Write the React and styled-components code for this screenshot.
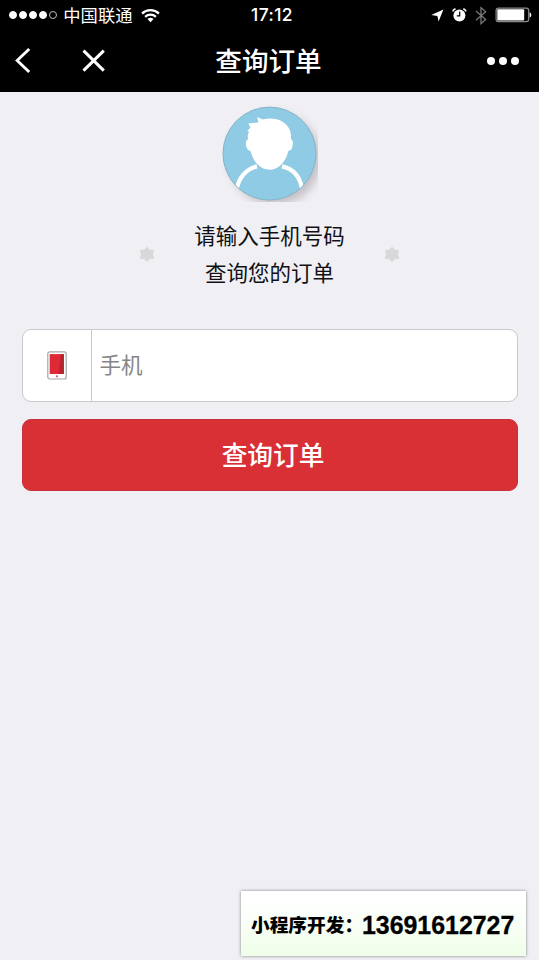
import React from 'react'
import styled, { createGlobalStyle } from 'styled-components'

const GlobalStyle = createGlobalStyle`
    *{
        box-sizing: border-box;
        margin: 0;
        padding: 0;
    }
    body{
        background: #efeff4;
        font-family: 'Noto Sans CJK SC', sans-serif;
    }
    svg{
        display: block;
        flex: none;
    }
`;

function WifiIcon() {
    return (
        <svg width="19" height="15" viewBox="0 0 18 14" fill="none" stroke="#fff" strokeWidth="2.1">
            <path d="M1 5.2a11.6 11.6 0 0 1 16 0" />
            <path d="M3.9 8.3a7.4 7.4 0 0 1 10.2 0" />
            <path d="M9 13.4 6.1 10.4a4.2 4.2 0 0 1 5.8 0z" fill="#fff" stroke="none" />
        </svg>
    )
}

function LocationIcon() {
    return (
        <svg width="13" height="13" viewBox="0 0 13 13">
            <path d="M12.4.5 7.6 12.6 6.4 6.9.3 6z" fill="#fff" />
        </svg>
    )
}

function AlarmIcon() {
    return (
        <svg width="15" height="14" viewBox="0 0 15 14">
            <circle cx="7.4" cy="7.4" r="6" fill="#fff" />
            <path d="M.9 3.5A3 3 0 0 1 3.6.9M13.9 3.5A3 3 0 0 0 11.2.9" stroke="#fff" strokeWidth="1.5" fill="none" />
            <path d="M7.7 3.6V7.8H4.8" stroke="#000" strokeWidth="1.2" fill="none" />
        </svg>
    )
}

function BluetoothIcon() {
    return (
        <svg width="12" height="19" viewBox="0 0 12 19" fill="none" stroke="#777" strokeWidth="1.3">
            <path d="M1 5 10.6 13.4 6 17.6V1.6L10.6 5.8 1 14.2" />
        </svg>
    )
}

function BatteryIcon() {
    return (
        <svg width="37" height="16" viewBox="0 0 37 16">
            <rect x="1.1" y="1.1" width="32.6" height="13.6" rx="2.4" fill="none" stroke="#8c8c8c" strokeWidth="1.2" />
            <rect x="2.3" y="2.2" width="26.9" height="11.4" rx="1" fill="#fff" />
            <path d="M34.6 5.2Q36.3 5.8 36.3 7.9T34.6 10.6z" fill="#fff" />
        </svg>
    )
}

function Avatar() {
    return (
        <svg width="98" height="98" viewBox="0 0 98 98">
            <defs>
                <clipPath id="face"><circle cx="48.5" cy="48.6" r="46" /></clipPath>
                <clipPath id="frame"><rect width="97" height="97" /></clipPath>
                <filter id="soft" x="-20%" y="-20%" width="140%" height="140%"><feGaussianBlur stdDeviation="4" /></filter>
            </defs>
            <g clipPath="url(#frame)">
                <circle cx="54" cy="54" r="46" fill="#8a7f88" opacity=".42" filter="url(#soft)" />
            </g>
            <circle cx="48.5" cy="48.6" r="46.5" fill="#8fcbe4" stroke="#86b4c6" />
            <g clipPath="url(#face)">
                <path d="M15.8 84C17.5 73 25 64 36 61.4M81 84C79.3 73 73 64 61 61.4" fill="none" stroke="#fff" strokeWidth="4.2" />
                <path d="M27 34.5C26.4 31 27 28.5 28.2 26.4L26 26.2 29.5 22.6 27.2 18.4 37.4 17.4 36.2 12 41.6 14.6C53 11.6 64.5 15.5 68.6 24.5C70 27.8 70.2 31 69.9 34.3C72.2 35 72.2 38.5 71.4 41.5C70.7 44.3 69.5 46 67.3 45.9C64.8 57 57.5 64.8 48.6 64.8C39.5 64.8 32 57 29.6 45.9C27.4 46 26 44 25.3 41.5C24.5 38.5 24.6 35 27 34.5Z" fill="#fff" />
            </g>
        </svg>
    )
}

function StarIcon() {
    return (
        <svg width="16" height="17" viewBox="0 0 16 17">
            <path d="M8 1.2 10.4 4.1 14.6 4.4 13.4 8.4 14.6 12.4 10.4 12.7 8 15.6 5.6 12.7 1.4 12.4 2.6 8.4 1.4 4.4 5.6 4.1z" fill="#d8d8da" stroke="#d8d8da" strokeWidth="1" strokeLinejoin="round" />
        </svg>
    )
}

function PhoneIcon() {
    return (
        <svg width="20" height="29" viewBox="0 0 20 29">
            <rect x=".8" y=".8" width="18.4" height="27.2" rx="2" fill="#fff" stroke="#a5a5aa" strokeWidth="1.2" />
            <rect x="2.7" y="3.1" width="14.2" height="19.9" fill="#df2937" />
            <path d="M13.8 3.1h3.1V23h-5.3z" fill="#b52631" />
            <circle cx="10" cy="25.3" r="1.1" fill="#e0525c" />
        </svg>
    )
}

function App() {
    return (
        <Page>
            <GlobalStyle />
            <StatusBar>
                <Carrier>
                    <Signal>
                        {[1, 1, 1, 1, 0].map((on, i) => <Dot key={i} $on={on} />)}
                    </Signal>
                    <span>中国联通</span>
                    <WifiIcon />
                </Carrier>
                <Time>17:12</Time>
                <Indicators>
                    <LocationIcon />
                    <AlarmIcon />
                    <BluetoothIcon />
                    <BatteryIcon />
                </Indicators>
            </StatusBar>
            <NavBar>
                <NavActions>
                    <svg width="17" height="28" viewBox="0 0 17 28" fill="none" stroke="#fff" strokeWidth="2.9">
                        <path d="M15.2 2 3.2 13.5 15.2 25" />
                    </svg>
                    <svg width="24" height="24" viewBox="0 0 24 24" fill="none" stroke="#fff" strokeWidth="3">
                        <path d="M1.5 1.6 21.8 21.6M21.8 1.6 1.5 21.6" />
                    </svg>
                </NavActions>
                <Title>查询订单</Title>
                <More>
                    <i /><i /><i />
                </More>
            </NavBar>
            <Main>
                <Avatar />
                <Intro>
                    <StarIcon />
                    <p>请输入手机号码<br />查询您的订单</p>
                    <StarIcon />
                </Intro>
                <Form onSubmit={(e) => e.preventDefault()}>
                    <Field>
                        <FieldIcon><PhoneIcon /></FieldIcon>
                        <input type="tel" placeholder="手机" />
                    </Field>
                    <Submit>查询订单</Submit>
                </Form>
            </Main>
            <Contact>
                <span>小程序开发：</span>
                <b>13691612727</b>
            </Contact>
        </Page>
    )
}

const Page = styled.div`
    position: relative;
    width: 539px;
    height: 960px;
    overflow: hidden;
    background: #efeff4;
`;

const StatusBar = styled.header`
    display: grid;
    grid-template-columns: 1fr auto 1fr;
    align-items: center;
    height: 30px;
    padding: 0 9px;
    background: #000;
    color: #fff;
`;

const Carrier = styled.div`
    display: flex;
    align-items: center;
    font-size: 17.3px;
    line-height: 30px;
    white-space: nowrap;
    span{
        margin: 0 9px 0 6px;
    }
`;

const Signal = styled.div`
    display: flex;
    gap: 1.6px;
`;

const Dot = styled.i`
    width: 8.4px;
    height: 8.4px;
    border-radius: 50%;
    border: 1px solid ${({$on}) => $on ? '#fff' : '#bbb'};
    background: ${({$on}) => $on ? '#fff' : 'transparent'};
`;

const Time = styled.div`
    font-family: Inter, sans-serif;
    font-size: 17.4px;
    font-weight: 500;
    letter-spacing: .45px;
    line-height: 30px;
    padding-left: 5px;
`;

const Indicators = styled.div`
    display: flex;
    align-items: center;
    justify-content: flex-end;
    gap: 8px;
    margin-right: -2px;
`;

const NavBar = styled.nav`
    display: grid;
    grid-template-columns: 1fr auto 1fr;
    align-items: center;
    height: 62px;
    padding: 0 20px 0 14px;
    background: #000;
    color: #fff;
`;

const NavActions = styled.div`
    display: flex;
    align-items: center;
    gap: 51px;
`;

const Title = styled.h1`
    padding: 0 0 3px 4px;
    font-size: 26.6px;
    font-weight: 500;
    line-height: 59px;
`;

const More = styled.div`
    display: flex;
    justify-content: flex-end;
    gap: 4px;
    i{
        width: 8px;
        height: 8px;
        border-radius: 50%;
        background: #fff;
    }
`;

const Main = styled.main`
    display: flex;
    flex-direction: column;
    align-items: center;
    padding: 13px 21.5px 0;
`;

const Intro = styled.section`
    display: flex;
    align-items: center;
    justify-content: space-between;
    width: 262px;
    height: 75px;
    margin-top: 14px;
    p{
        padding-bottom: 3px;
        color: #111114;
        font-size: 21.5px;
        line-height: 37px;
        text-align: center;
    }
`;

const Form = styled.form`
    display: flex;
    flex-direction: column;
    gap: 17px;
    width: 100%;
    margin-top: 36.5px;
`;

const Field = styled.label`
    display: flex;
    height: 73px;
    border: 1px solid #c9c9ce;
    border-radius: 9px;
    background: #fff;
    overflow: hidden;
    input{
        flex: 1;
        min-width: 0;
        border: 0;
        outline: 0;
        padding: 0 7.5px 3px;
        background: transparent;
        font-family: inherit;
        font-size: 21.5px;
        &::placeholder{
            color: #858585;
        }
    }
`;

const FieldIcon = styled.span`
    display: flex;
    align-items: center;
    justify-content: center;
    width: 69.5px;
    border-right: 1px solid #c9c9ce;
`;

const Submit = styled.button`
    height: 72px;
    padding: 0 0 3px 7px;
    border: 1px solid #c9303a;
    border-radius: 9px;
    background: #d83035;
    color: #fff;
    font-family: inherit;
    font-size: 25.7px;
    font-weight: 500;
`;

// Floating hotline card, bottom right
const Contact = styled.aside`
    position: absolute;
    right: 13px;
    bottom: 4px;
    display: flex;
    align-items: center;
    width: 285px;
    height: 65px;
    padding-left: 10px;
    background: linear-gradient(#fff 15%, #effee8);
    box-shadow: 0 0 3px rgba(0, 0, 0, .45);
    color: #000;
    white-space: nowrap;
    span{
        width: 111px;
        font-size: 18.7px;
        font-weight: 900;
        line-height: 65px;
    }
    b{
        padding-top: 4px;
        font-family: 'Liberation Sans', sans-serif;
        font-size: 24.9px;
        -webkit-text-stroke: .3px #000;
    }
`;

export default App
